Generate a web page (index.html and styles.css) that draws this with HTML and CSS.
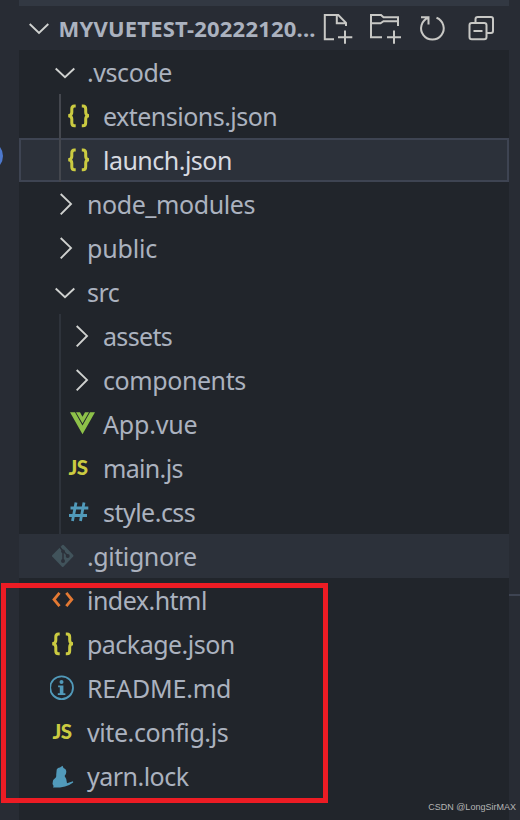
FILE: index.html
```html
<!DOCTYPE html>
<html lang="en">
<head>
<meta charset="utf-8">
<title>Explorer</title>
<link rel="stylesheet" href="styles.css">
</head>
<body>
<svg class="defs" width="0" height="0">
  <symbol id="down" viewBox="0 0 28 44"><path d="M4.7 18.5L14 27.3L23.3 18.5" fill="none" stroke="#d0d2d0" stroke-width="1.9"/></symbol>
  <symbol id="right" viewBox="0 0 28 44"><path d="M9.7 12.6L20 22.5L9.7 33" transform="translate(0 -.6)" fill="none" stroke="#d0d2d0" stroke-width="1.9"/></symbol>
  <symbol id="json" viewBox="0 0 28 44"><path d="M8.7 12H7.4Q4.8 12 4.8 15V18.3Q4.8 21.7 1.2 21.7Q4.8 21.7 4.8 25V28.8Q4.8 31.8 7.4 31.8H8.7M14.8 12H16Q18.7 12 18.7 15V18.3Q18.7 21.7 22 21.7Q18.7 21.7 18.7 25V28.8Q18.7 31.8 16 31.8H14.8" fill="none" stroke="#cbcb41" stroke-width="3"/></symbol>
  <symbol id="css" viewBox="0 0 28 44"><path d="M9 12.5L5.5 31M17 12.5L13.5 31M3.5 18H21.3M2 25.5H20" fill="none" stroke="#519aba" stroke-width="2.8"/></symbol>
  <symbol id="vue" viewBox="0 0 28 44"><path d="M3 10.3H8L15.5 23.5L23 10.3H28L15.5 32.3Z" fill="#8dc149"/><path d="M9 10.3H13L15.5 14.8L18 10.3H22L15.5 21.5Z" fill="#8dc149"/></symbol>
  <symbol id="git" viewBox="0 0 28 44"><path d="M11.3 11Q12 10.3 12.7 11L22.2 21Q22.8 21.7 22.2 22.4L12.4 32.7Q11.7 33.3 11 32.7L1.2 22.6Q.7 21.9 1.2 21.2Z" fill="#41535b"/><path d="M8.8 13L12 17V28M12.5 17.5L16.5 21.5" fill="none" stroke="#2c313a" stroke-width="1.5"/><circle cx="12" cy="17.3" r="1.9" fill="#2c313a"/><circle cx="12" cy="27" r="2" fill="#2c313a"/><circle cx="16.7" cy="22" r="2" fill="#2c313a"/></symbol>
  <symbol id="html" viewBox="0 0 28 44"><path d="M8.5 14.8L3 21.5L8.5 28.2M15.3 14.8L20.8 21.5L15.3 28.2" fill="none" stroke="#e37933" stroke-width="2.8"/></symbol>
  <symbol id="info" viewBox="-1 0 28 44"><circle cx="10.6" cy="21.7" r="11.4" fill="none" stroke="#519aba" stroke-width="1.8"/><path d="M7.1 19.6H12.4V27.3H14.4V29H6.8V27.3H8.8V21.3H7.1Z" fill="#519aba"/><circle cx="10.5" cy="16" r="2" fill="#519aba"/></symbol>
  <symbol id="yarn" viewBox="0 0 28 44"><path d="M11.5 11.8L12.5 14Q15.5 15 15.3 18Q15.3 20 13.6 22Q16 25 16 29.3Q19 28.5 22 27.3L22.2 28.5Q17.5 32 14 32.5L9 33.5L2 33.4L2.6 32Q.8 30.8 1.8 27.8Q2.2 25.5 4.8 23.6Q5.5 22.5 5.2 20.8L5.7 15.5Q6.8 13.4 9 13.5Z" fill="#519aba"/></symbol>
</svg>
<div class="window">
  <div class="rail"><span class="badge"></span></div>
  <main class="explorer">
    <div class="strip"></div>
    <header class="header">
      <svg class="twisty" width="28" height="44"><path d="M5.7 18L15 27L24.3 18" fill="none" stroke="#d0d2d0" stroke-width="1.9"/></svg>
      <h1 class="title">MYVUETEST-20222120...</h1>
      <div class="actions">
        <svg width="32" height="44"><path d="M13 33.2H3.8V9H17.3L25 16.8V20M15.8 9V17.3H25M24 24.5V37.7M17 31.2H31.3" transform="translate(0 0)"/></svg>
        <svg width="32" height="44"><path d="M13 31.2H2V9H12L14.5 11.3H29V20M2 17.3H11.5L14.5 15.2H29M25 24.5V37.7M18 31.2H32"/></svg>
        <svg width="32" height="44"><path d="M4 11.2H11.5V18.5M11.3 11.7A11.3 11.3 0 1 0 19.5 11.7"/></svg>
        <svg width="32" height="44"><rect x="3.5" y="17" width="17" height="16.3" rx="2.3"/><path d="M9.5 17V13.3Q9.5 11 11.8 11H25Q27 11 27 13V24.8Q27 27 25 27H20.5M7.5 25H16.5"/></svg>
      </div>
    </header>
    <ul class="tree">
      <li class="row"><svg class="icon"><use href="#down"/></svg><span class="snug">.vscode</span></li>
      <li><ul class="nested guide-active">
        <li class="row"><svg class="icon"><use href="#json"/></svg><span class="tight">extensions.json</span></li>
        <li class="row selected"><svg class="icon"><use href="#json"/></svg><span class="tight">launch.json</span></li>
      </ul></li>
      <li class="row"><svg class="icon"><use href="#right"/></svg><span class="snug">node_modules</span></li>
      <li class="row"><svg class="icon"><use href="#right"/></svg><span class="loose">public</span></li>
      <li class="row"><svg class="icon"><use href="#down"/></svg><span class="tight">src</span></li>
      <li><ul class="nested">
        <li class="row"><svg class="icon"><use href="#right"/></svg><span class="tighter">assets</span></li>
        <li class="row"><svg class="icon"><use href="#right"/></svg><span class="snug">components</span></li>
        <li class="row"><svg class="icon"><use href="#vue"/></svg><span class="loose">App.vue</span></li>
        <li class="row"><span class="icon js">JS</span><span class="tighter">main.js</span></li>
        <li class="row"><svg class="icon"><use href="#css"/></svg><span class="tight">style.css</span></li>
      </ul></li>
      <li class="row hovered"><svg class="icon"><use href="#git"/></svg><span class="snug">.gitignore</span></li>
      <li class="row"><svg class="icon"><use href="#html"/></svg><span class="tight">index.html</span></li>
      <li class="row"><svg class="icon"><use href="#json"/></svg><span class="tight">package.json</span></li>
      <li class="row"><svg class="icon info"><use href="#info"/></svg><span class="loose">README.md</span></li>
      <li class="row"><span class="icon js">JS</span><span class="snug">vite.config.js</span></li>
      <li class="row"><svg class="icon"><use href="#yarn"/></svg><span class="tight">yarn.lock</span></li>
    </ul>
  </main>
  <div class="edge"><span class="divider"></span></div>
  <div class="highlight"></div>
  <div class="credit">CSDN @LongSirMAX</div>
</div>
</body>
</html>
```
FILE: styles.css
```css
* { box-sizing: border-box; }
body { margin: 0; background: #282c34; }
.defs { position: absolute; }
.window {
  position: relative;
  display: grid;
  grid-template-columns: 19px 490px 11px;
  width: 520px;
  height: 820px;
  overflow: hidden;
  font-family: "Noto Sans", "Open Sans", sans-serif;
  color: #abb2bf;
}
.rail, .edge { position: relative; background: #282c34; }
.badge {
  position: absolute;
  left: -27px;
  top: 141px;
  width: 30px;
  height: 30px;
  border-radius: 50%;
  background: #4d78cc;
}
.divider { position: absolute; top: 594px; left: 0; width: 11px; height: 2px; background: #3e4452; }
.explorer { background: #21252b; }
.strip { height: 6px; background: #323842; }
.header { display: flex; height: 44px; padding-left: 5px; background: #282c34; }
.twisty { flex: none; }
.title {
  flex: none;
  width: 269px;
  margin: 0;
  padding-left: 6.5px;
  font-size: 22px;
  line-height: 45px;
  font-weight: 700;
  letter-spacing: .2px;
  white-space: nowrap;
}
.actions { display: flex; gap: 16.2px; }
.actions svg { flex: none; fill: none; stroke: #c8c8c5; stroke-width: 2; }
.tree, .nested { margin: 0; padding: 0; list-style: none; }
.row {
  display: flex;
  height: 44px;
  padding-left: 32px;
  font-size: 25px;
  line-height: 45px;
  white-space: nowrap;
}
.nested { position: relative; }
.nested::before {
  content: "";
  position: absolute;
  z-index: 1;
  left: 40px;
  top: 0;
  bottom: 0;
  width: 2px;
  background: #2e333b;
}
.guide-active::before { background: #44474e; }
.nested .row { padding-left: 48px; }
.icon { flex: none; width: 28px; height: 44px; margin-right: 8px; }
.info { margin-left: -1px; margin-right: 9px; }
.js {
  padding-left: 1.5px;
  font: 900 20.5px/43px "Lato", sans-serif;
  letter-spacing: -.6px;
  color: #cbcb41;
}
.loose { letter-spacing: -.18px; }
.snug { letter-spacing: -.42px; }
.tight { letter-spacing: -.52px; }
.tighter { letter-spacing: -.67px; }
.selected { background: #2c313a; box-shadow: inset 0 0 0 2px #3e4452; color: #d7dae0; }
.hovered { background: #2c313a; }
.highlight {
  position: absolute;
  left: 1px;
  top: 583px;
  width: 327px;
  height: 220px;
  border: 5px solid #ed1c24;
}
.credit {
  position: absolute;
  right: 4px;
  top: 801px;
  font: 9px/13px "Liberation Sans", sans-serif;
  letter-spacing: .01px;
  color: #b5b5b5;
}
```
